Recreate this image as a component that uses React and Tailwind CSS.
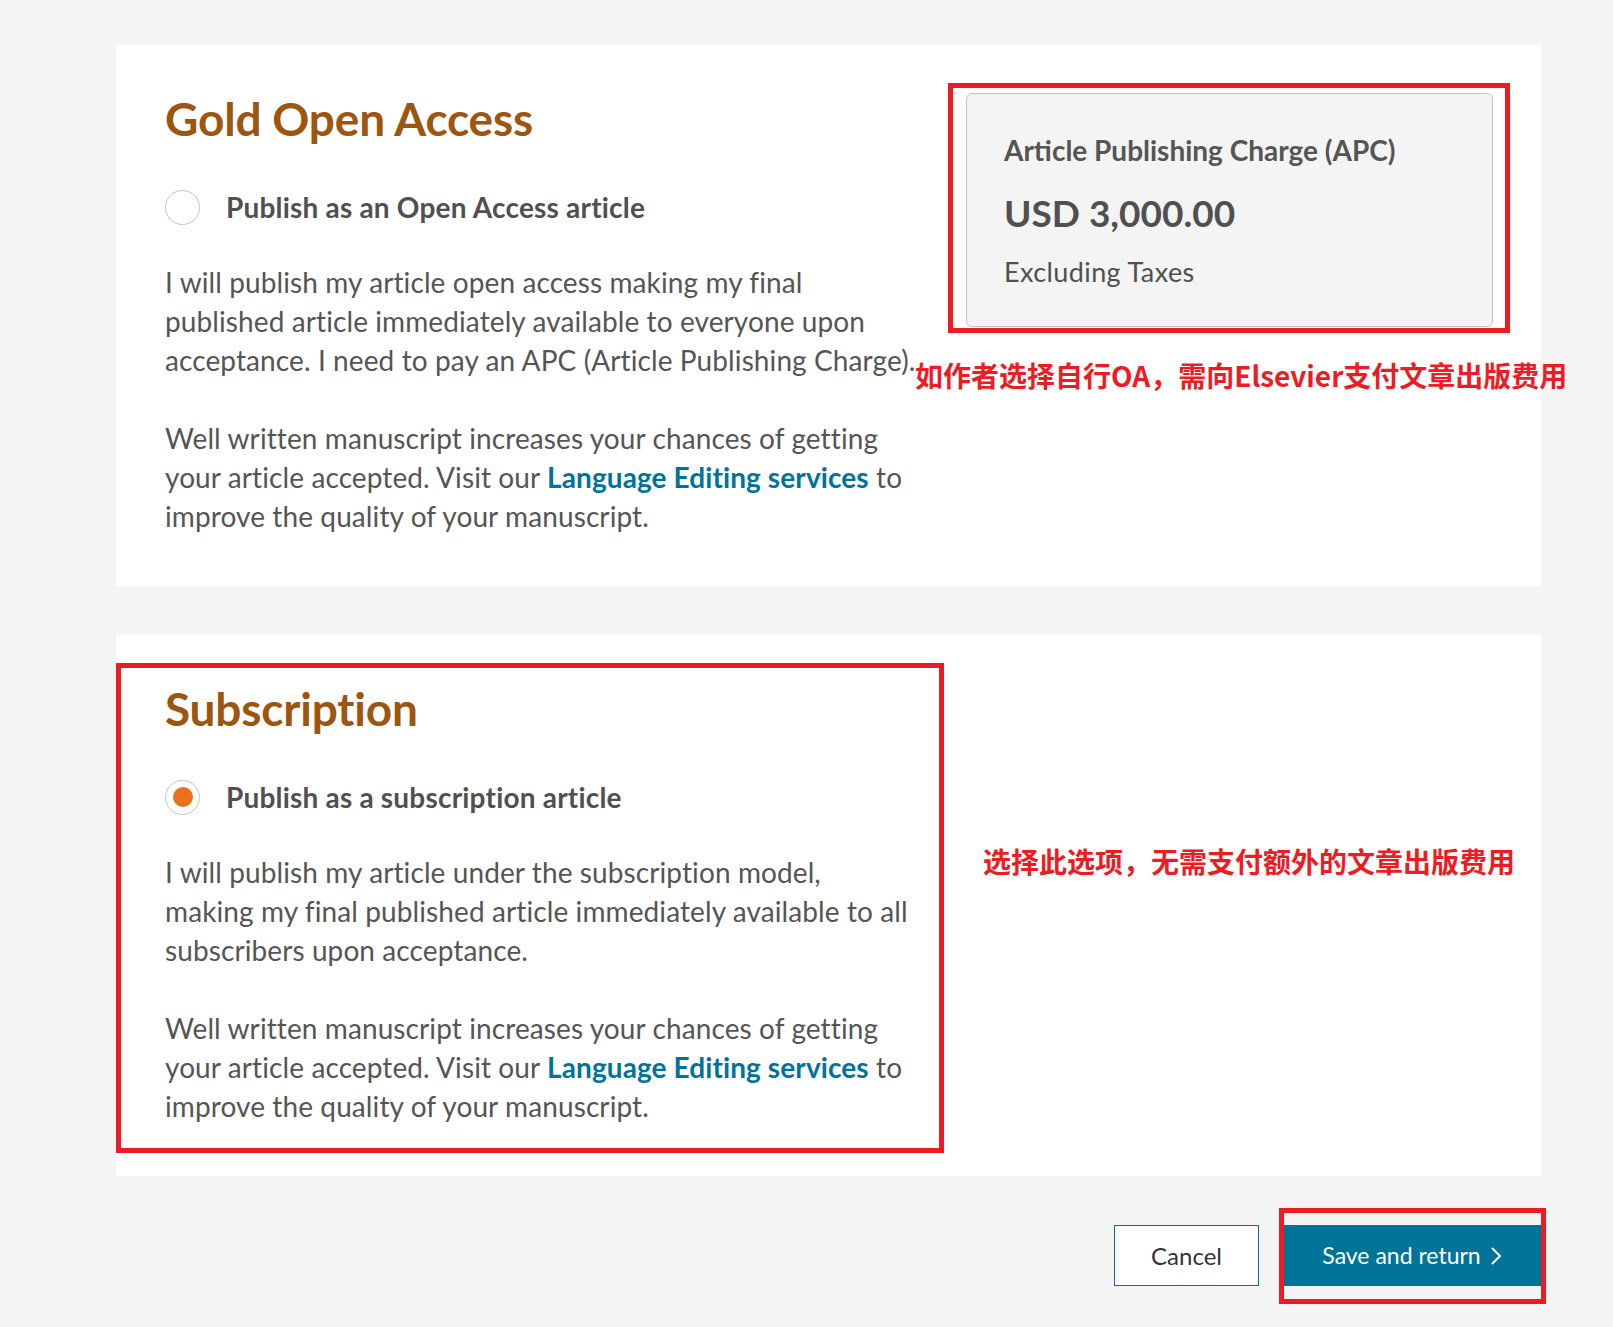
import React, { useState } from "react";

const font = { fontFamily: "Lato, 'Noto Sans', sans-serif" };

const Radio = ({ checked, onClick }) => (
  <button
    type="button"
    onClick={onClick}
    className="w-[35px] h-[35px] rounded-full border border-[#c4c4c4] bg-white flex items-center justify-center shrink-0"
  >
    {checked && <span className="w-[20px] h-[20px] rounded-full bg-[#e9711c]" />}
  </button>
);

const Section = ({ title, label, checked, onSelect, width, children }) => (
  <div className={`${width} shrink-0 pt-[46px] pb-[50px]`}>
    <h2 className="text-[46px] leading-[56px] font-bold text-[#9d5510] tracking-[-0.2px]">{title}</h2>

    <div className="mt-[40px] flex items-center h-[40px]">
      <Radio checked={checked} onClick={onSelect} />
      <span className="ml-[26px] text-[28px] leading-[40px] font-bold text-[#505050] tracking-[0.2px]">{label}</span>
    </div>

    <p className="mt-[36px] text-[28px] leading-[39px] text-[#555] tracking-[0.1px]">{children}</p>

    <p className="mt-[39px] text-[28px] leading-[39px] text-[#555] tracking-[0.1px]">
      Well written manuscript increases your chances of getting your article accepted. Visit our{" "}
      <a href="#" className="font-bold text-[#007398]">
        Language Editing services
      </a>{" "}
      to improve the quality of your manuscript.
    </p>
  </div>
);

export default function App() {
  const [choice, setChoice] = useState("subscription");

  return (
    <div className="min-h-[1327px] bg-[#f4f4f4] pl-[116px] pr-[72px] pt-[45px]" style={font}>
      {/* Gold Open Access */}
      <div className="relative bg-white h-[541px] flex pl-[49px] pr-[48px]">
        <Section
          width="w-[756px]"
          title="Gold Open Access"
          label="Publish as an Open Access article"
          checked={choice === "oa"}
          onSelect={() => setChoice("oa")}
        >
          I will publish my article open access making my final published article immediately available to
          everyone upon acceptance. I need to pay an APC (Article Publishing Charge).
        </Section>

        <div className="ml-auto mt-[48px] w-[527px] h-[234px] bg-[#f4f4f4] border border-[#bcc6cd] rounded-[6px] pl-[37px] pt-[38px] text-[#505050]">
          <div className="text-[28px] leading-[36px] font-bold text-[#555]">Article Publishing Charge (APC)</div>
          <div className="mt-[23px] text-[37px] leading-[44px] font-bold">USD 3,000.00</div>
          <div className="mt-[19px] text-[27px] leading-[36px] tracking-[0.4px]">Excluding Taxes</div>
        </div>

        {/* annotation */}
        <div className="absolute left-[832px] top-[38px] w-[562px] h-[250px] border-[5px] border-[#ed1c24] pointer-events-none" />
        <div
          className="absolute left-[799px] top-[310px] whitespace-nowrap text-[28px] leading-[40px] font-bold text-[#ed1c24]"
          style={{ fontFamily: "'Noto Sans CJK SC', sans-serif" }}
        >
          如作者选择自行OA，需向Elsevier支付文章出版费用
        </div>
      </div>

      {/* Subscription */}
      <div className="relative mt-[49px] bg-white h-[541px] flex pl-[49px] pr-[48px]">
        <Section
          width="w-[749px]"
          title="Subscription"
          label="Publish as a subscription article"
          checked={choice === "subscription"}
          onSelect={() => setChoice("subscription")}
        >
          I will publish my article under the subscription model, making my final published article immediately
          available to all subscribers upon acceptance.
        </Section>

        {/* annotation */}
        <div className="absolute left-0 top-[28px] w-[828px] h-[490px] border-[5px] border-[#ed1c24] pointer-events-none" />
        <div
          className="absolute left-[867px] top-[206px] whitespace-nowrap text-[28px] leading-[40px] font-bold text-[#ed1c24]"
          style={{ fontFamily: "'Noto Sans CJK SC', sans-serif" }}
        >
          选择此选项，无需支付额外的文章出版费用
        </div>
      </div>

      {/* Actions */}
      <div className="mt-[49px] flex justify-end gap-[24px]">
        <button className="w-[145px] h-[61px] bg-white border border-[#0c6f90] text-[24px] text-[#333]">Cancel</button>
        <div className="relative">
          <button className="w-[258px] h-[61px] bg-[#007398] text-white text-[23px] flex items-center justify-center gap-[9px]">
            Save and return
            <svg width="12" height="20" viewBox="0 0 12 20" fill="none" stroke="white" strokeWidth="2">
              <polyline points="2,2 10,10 2,18" />
            </svg>
          </button>
          <div className="absolute -left-[4px] -top-[17px] -right-[5px] -bottom-[18px] border-[5px] border-[#ed1c24] pointer-events-none" />
        </div>
      </div>
    </div>
  );
}
